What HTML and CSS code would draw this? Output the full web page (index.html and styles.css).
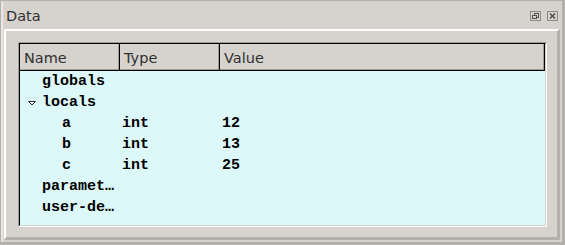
FILE: index.html
```html
<!DOCTYPE html>
<html>
<head>
<meta charset="utf-8">
<link rel="stylesheet" href="styles.css">
</head>
<body>
<div class="window">
  <div class="titlebar">
    <span class="title">Data</span>
    <div class="buttons">
      <svg class="btn" width="11" height="10" viewBox="0 0 11 10">
        <rect x="0.5" y="0.5" width="10" height="9" fill="none" stroke="#8e8a86"/>
        <rect x="4.5" y="2.5" width="4" height="4" fill="none" stroke="#55514e"/>
        <rect x="2.5" y="4.5" width="4" height="3" fill="#d6d2ce" stroke="#55514e"/>
      </svg>
      <svg class="btn" width="11" height="10" viewBox="0 0 11 10">
        <rect x="0.5" y="0.5" width="10" height="9" fill="none" stroke="#8e8a86"/>
        <path d="M3 2.5 L8 7.5 M8 2.5 L3 7.5" stroke="#55514e" stroke-width="1.6"/>
      </svg>
    </div>
  </div>
  <div class="frame">
    <div class="table">
      <div class="table-inner">
        <div class="header">
          <div class="hcell col-name">Name</div>
          <div class="hcell col-type">Type</div>
          <div class="hcell col-value">Value</div>
        </div>
        <div class="rows">
          <div class="row">
            <div class="cell col-name l1">globals</div>
            <div class="cell col-type"></div>
            <div class="cell col-value"></div>
          </div>
          <div class="row">
            <div class="cell col-name l0"><svg class="arrow" width="20" height="20" viewBox="0 0 20 20"><polygon points="6.5,8.5 13.5,8.5 10,12" fill="none" stroke="#333"/></svg>locals</div>
            <div class="cell col-type"></div>
            <div class="cell col-value"></div>
          </div>
          <div class="row">
            <div class="cell col-name l2">a</div>
            <div class="cell col-type">int</div>
            <div class="cell col-value">12</div>
          </div>
          <div class="row">
            <div class="cell col-name l2">b</div>
            <div class="cell col-type">int</div>
            <div class="cell col-value">13</div>
          </div>
          <div class="row">
            <div class="cell col-name l2">c</div>
            <div class="cell col-type">int</div>
            <div class="cell col-value">25</div>
          </div>
          <div class="row">
            <div class="cell col-name l1">parameters</div>
            <div class="cell col-type"></div>
            <div class="cell col-value"></div>
          </div>
          <div class="row">
            <div class="cell col-name l1">user-defined</div>
            <div class="cell col-type"></div>
            <div class="cell col-value"></div>
          </div>
        </div>
      </div>
    </div>
  </div>
</div>
</body>
</html>
```

FILE: styles.css
```css
html, body {
  margin: 0;
  padding: 0;
  background: #d6d2ce;
}

.window {
  width: 565px;
  height: 245px;
  box-sizing: border-box;
  border-style: solid;
  border-color: #b3afab;
  border-width: 1px 3px 3px 1px;
  box-shadow: inset 2px 0 0 #e8e5e2;
  padding-bottom: 2px;
  display: flex;
  flex-direction: column;
  background: #d6d2ce;
}

.titlebar {
  height: 28px;
  flex: none;
  display: flex;
  justify-content: space-between;
  align-items: flex-start;
}

.title {
  padding-left: 5px;
  padding-top: 2px;
  line-height: 26px;
  font-family: "DejaVu Sans", sans-serif;
  font-size: 14.5px;
  color: #303030;
}

.buttons {
  display: flex;
  gap: 6px;
  margin-top: 10px;
  padding-right: 4px;
}

.btn {
  display: block;
}

.frame {
  flex: 1;
  margin-left: 3px;
  margin-right: 2px;
  border-style: solid;
  border-width: 2px 3px 3px 2px;
  border-color: #ffffff #b3afab #b3afab #ffffff;
  padding: 11px 10px 10px 12px;
  display: flex;
  flex-direction: column;
}

.table {
  flex: 1;
  border-style: solid;
  border-width: 1px;
  border-color: #a09c98 #ffffff #ffffff #a09c98;
  display: flex;
  flex-direction: column;
}

.table-inner {
  flex: 1;
  border-style: solid;
  border-width: 1px;
  border-color: #000000 #d6d2ce #d6d2ce #000000;
  background: #ddf8f9;
  display: flex;
  flex-direction: column;
}

.header {
  display: flex;
  height: 27px;
  background: #d6d2ce;
}

.hcell {
  box-sizing: border-box;
  height: 27px;
  border-right: 1px solid #000;
  border-bottom: 1px solid #000;
  box-shadow: inset -1px -1px 0 #a09c98;
  padding-left: 4px;
  padding-top: 2px;
  line-height: 24px;
  font-family: "DejaVu Sans", sans-serif;
  font-size: 14.5px;
  color: #303030;
}

.col-name {
  width: 100px;
  flex: none;
}

.col-type {
  width: 100px;
  flex: none;
}

.col-value {
  flex: 1;
}

.row {
  display: flex;
  height: 21px;
}

.cell {
  box-sizing: border-box;
  height: 21px;
  padding-top: 1px;
  line-height: 20px;
  padding-left: 2px;
  padding-right: 2px;
  font-family: "Liberation Mono", "Courier New", monospace;
  font-weight: bold;
  font-size: 15px;
  color: #000;
  white-space: nowrap;
  overflow: hidden;
  text-overflow: ellipsis;
}

.cell.l0 {
  padding-left: 2px;
}

.cell.l1 {
  padding-left: 22px;
}

.cell.l2 {
  padding-left: 42px;
}

.arrow {
  display: inline-block;
  vertical-align: top;
}
```
